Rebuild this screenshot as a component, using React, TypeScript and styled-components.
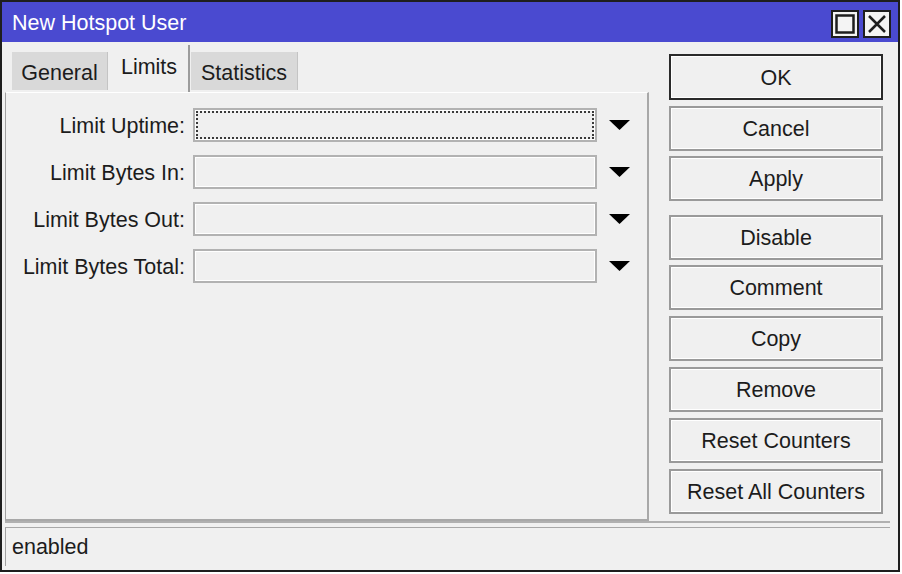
import React from 'react';
import styled, { createGlobalStyle } from 'styled-components';

const GlobalStyle = createGlobalStyle`
  html, body {
    margin: 0;
    padding: 0;
    background: #ffffff;
  }
  * {
    box-sizing: border-box;
  }
`;

const Window = styled.div`
  width: 900px;
  height: 572px;
  border: 2px solid #1e1e1e;
  background: #f0f0f0;
  display: flex;
  flex-direction: column;
  font-family: 'Liberation Sans', Arial, sans-serif;
  font-size: 21.5px;
  color: #1c1c1c;
`;

const TitleBar = styled.div`
  height: 40px;
  background: #4a4ad0;
  display: flex;
  align-items: center;
  justify-content: space-between;
  padding: 0 7px 0 10px;
`;

const Title = styled.div`
  color: #ffffff;
  font-size: 21.5px;
  padding-top: 3px;
`;

const TitleButtons = styled.div`
  display: flex;
  gap: 4px;
  padding-top: 3px;
`;

const TitleButton = styled.div`
  width: 28px;
  height: 28px;
  background: #f4f4f4;
  border: 2px solid #1e1e1e;
  display: flex;
  align-items: center;
  justify-content: center;
`;

const Body = styled.div`
  flex: 1;
  display: flex;
  flex-direction: column;
  padding: 0 8px 4px 3px;
`;

const Main = styled.div`
  height: 479px;
  display: flex;
`;

const LeftCol = styled.div`
  width: 644px;
  display: flex;
  flex-direction: column;
`;

const Tabs = styled.div`
  height: 50px;
  display: flex;
  align-items: flex-end;
  padding-left: 7px;
`;

const Tab = styled.div<{ $active?: boolean; $w: number }>`
  width: ${(p) => p.$w}px;
  height: ${(p) => (p.$active ? 47 : 38)}px;
  margin-bottom: ${(p) => (p.$active ? 0 : 2)}px;
  margin-right: ${(p) => (p.$active ? 1 : 2)}px;
  background: ${(p) => (p.$active ? '#f0f0f0' : '#d9d9d9')};
  border-right: ${(p) => (p.$active ? '2px solid #9c9c9c' : '1px solid #c4c4c4')};
  display: flex;
  align-items: center;
  justify-content: center;
  padding-top: ${(p) => (p.$active ? 0 : 4)}px;
  padding-bottom: ${(p) => (p.$active ? 2 : 0)}px;
  white-space: nowrap;
`;

const Panel = styled.div`
  flex: 1;
  border-top: 1px solid #ffffff;
  border-left: 1px solid #a0a0a0;
  border-right: 2px solid #a8a8a8;
  border-bottom: 2px solid #a8a8a8;
  padding-top: 15px;
  display: flex;
  flex-direction: column;
  gap: 13px;
`;

const Row = styled.div`
  display: flex;
  align-items: center;
  height: 34px;
`;

const Label = styled.div`
  width: 180px;
  text-align: right;
  padding-right: 1px;
  padding-top: 2px;
  white-space: nowrap;
`;

const Field = styled.div<{ $focused?: boolean }>`
  margin-left: 7px;
  width: 404px;
  height: 34px;
  background: #f0f0f0;
  border: 2px solid #b2b2b2;
  box-shadow: inset 0 0 0 1px #ffffff;
  outline: ${(p) => (p.$focused ? '2px dotted #3a3a3a' : 'none')};
  outline-offset: -5px;
`;

const Arrow = styled.div`
  margin-left: 12px;
  width: 21px;
  height: 10px;
  display: flex;
`;

const RightCol = styled.div`
  margin-left: 20px;
  width: 214px;
  padding-top: 12px;
  display: flex;
  flex-direction: column;
`;

const Button = styled.div<{ $primary?: boolean; $gapTop?: number }>`
  height: ${(p) => (p.$primary ? 46 : 45)}px;
  margin-top: ${(p) => p.$gapTop ?? 6}px;
  border: 2px solid ${(p) => (p.$primary ? '#2a2a2a' : '#9a9a9a')};
  box-shadow: inset 0 0 0 1px #ffffff;
  background: #f0f0f0;
  display: flex;
  align-items: center;
  justify-content: center;
  padding-top: 2px;
  white-space: nowrap;
`;

const StatusSep = styled.div`
  height: 2px;
  background: #b0b0b0;
`;

const StatusBar = styled.div`
  margin-top: 4px;
  height: 39px;
  border-top: 1px solid #a8a8a8;
  border-left: 1px solid #a0a0a0;
  padding-left: 6px;
  display: flex;
  align-items: center;
`;

const DropArrow = () => (
  <Arrow>
    <svg width="21" height="10" viewBox="0 0 21 10">
      <polygon points="0,0 21,0 10.5,10" fill="#000" />
    </svg>
  </Arrow>
);

const fields = ['Limit Uptime:', 'Limit Bytes In:', 'Limit Bytes Out:', 'Limit Bytes Total:'];

const buttons: { label: string; primary?: boolean; gapTop?: number }[] = [
  { label: 'OK', primary: true, gapTop: 0 },
  { label: 'Cancel' },
  { label: 'Apply', gapTop: 5 },
  { label: 'Disable', gapTop: 14 },
  { label: 'Comment', gapTop: 5 },
  { label: 'Copy' },
  { label: 'Remove' },
  { label: 'Reset Counters' },
  { label: 'Reset All Counters' },
];

export default function App() {
  return (
    <>
      <GlobalStyle />
      <Window>
        <TitleBar>
          <Title>New Hotspot User</Title>
          <TitleButtons>
            <TitleButton>
              <svg width="20" height="20" viewBox="0 0 20 20">
                <rect x="1.5" y="1.5" width="17" height="17" fill="none" stroke="#1e1e1e" strokeWidth="2.5" />
              </svg>
            </TitleButton>
            <TitleButton>
              <svg width="20" height="20" viewBox="0 0 20 20">
                <path d="M2 2 L18 18 M18 2 L2 18" stroke="#1e1e1e" strokeWidth="2.5" />
              </svg>
            </TitleButton>
          </TitleButtons>
        </TitleBar>
        <Body>
          <Main>
            <LeftCol>
              <Tabs>
                <Tab $w={96}>General</Tab>
                <Tab $w={80} $active>
                  Limits
                </Tab>
                <Tab $w={107}>Statistics</Tab>
              </Tabs>
              <Panel>
                {fields.map((f, i) => (
                  <Row key={f}>
                    <Label>{f}</Label>
                    <Field $focused={i === 0} />
                    <DropArrow />
                  </Row>
                ))}
              </Panel>
            </LeftCol>
            <RightCol>
              {buttons.map((b) => (
                <Button key={b.label} $primary={b.primary} $gapTop={b.gapTop}>
                  {b.label}
                </Button>
              ))}
            </RightCol>
          </Main>
          <StatusSep />
          <StatusBar>enabled</StatusBar>
        </Body>
      </Window>
    </>
  );
}
